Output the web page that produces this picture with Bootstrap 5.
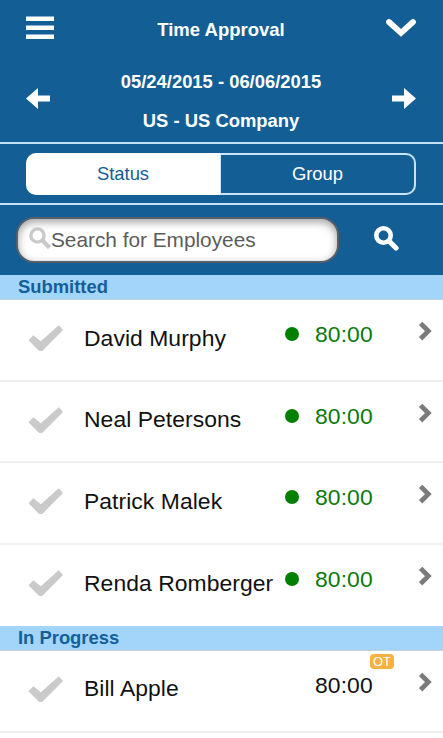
<!DOCTYPE html>
<html lang="en">
<head>
  <meta charset="UTF-8">
  <meta name="viewport" content="width=device-width, initial-scale=1">
  <title>Time Approval</title>
  <link href="https://cdn.jsdelivr.net/npm/bootstrap@5.3.3/dist/css/bootstrap.min.css" rel="stylesheet">
  <style>
    body { font-family: "Liberation Sans", Arial, sans-serif; color: #111; overflow: hidden; }
    svg { display: block; flex: none; }
    .app-top { background: #135f95; color: #fff; }
    .title-bar { height: 60px; padding: 0 27px 0 26px; }
    .title-bar h1 { font-size: 18.5px; line-height: 22px; padding-left: 2px; }
    .period-bar { height: 84px; padding: 3px 27px 0 26px; border-bottom: 2px solid #c4e2f5; }
    .period-bar .period-text { font-size: 18.4px; line-height: 38.5px; }
    .switch-bar { height: 61px; padding: 9px 27px 0 26px; border-bottom: 2px solid #c4e2f5; }
    .switch-bar .btn-group { height: 42px; }
    .switch-bar .btn { --bs-btn-color: #fff; --bs-btn-border-color: #c9e5f7; --bs-btn-border-width: 2px; --bs-btn-border-radius: 10px;
      --bs-btn-active-bg: #fff; --bs-btn-active-color: #135f95; --bs-btn-active-border-color: #fff;
      --bs-btn-padding-y: 0; --bs-btn-padding-x: 0; font-size: 18.4px; flex: 1 1 0; }
    .switch-bar .btn.active { flex: 0 0 194px; }
    .search-bar { height: 70px; padding: 0 44px 0 16px; }
    .search-box { width: 323px; height: 46px; padding-left: 11px; border: 2px solid #55606a; border-radius: 18px; background: #fff; box-shadow: inset 0 3px 8px rgba(0, 0, 0, .38); }
    .search-box .form-control { font-size: 20.8px; line-height: 26px; padding: 0; color: #555; }
    .search-box .form-control::placeholder { color: #5c5c5c; opacity: 1; }
    .group-title { height: 25px; padding-left: 18px; background: #a2d5f9; color: #135f9b; font-size: 18.4px; line-height: 23px; border-bottom: 1px solid #c3d3de; }
    .employee { height: 81.7px; padding: 0 11px 0 28px; border-bottom: 2px solid #efefef; }
    .employee.last-of-group { height: 80.9px; border-bottom: 0; }
    .emp-check { margin-top: 25px; width: 35px; }
    .emp-name { margin: 23.5px 0 0 21px; width: 195px; font-size: 22.9px; line-height: 28px; letter-spacing: .06px; white-space: nowrap; }
    .emp-dot { width: 14px; height: 14px; margin: 27px 0 0 6px; border-radius: 50%; }
    .emp-hours { margin: 20px 0 0 16px; font-size: 22.9px; line-height: 28px; letter-spacing: .1px; }
    .approved .emp-dot { background: #008000; }
    .approved .emp-hours { color: #0b7a0b; }
    .emp-arrow { margin-top: 21px; }
    .overtime { left: 370px; top: 3px; width: 24px; height: 15px; background: #fcb040; color: #fff; border-radius: 4px; font-size: 13px; line-height: 15px; text-align: center; }
  </style>
</head>
<body>
  <svg class="d-none">
    <symbol id="check" viewBox="0 0 35 27">
      <path d="M0.5 15.2 5.3 10.2 12.8 16.2 30.8 0.3 35 5 14.7 25.4Q12.7 26.8 10.6 25.4z" fill="#cacaca"/>
    </symbol>
    <symbol id="chevron" viewBox="0 0 14 20">
      <path d="M2.6 2.4 10.3 10.1 2.6 17.8" fill="none" stroke="#7b7b7b" stroke-width="4.8"/>
    </symbol>
  </svg>

  <header class="app-top">
    <div class="title-bar d-flex align-items-center justify-content-between">
      <svg class="mb-1" width="28" height="24" fill="#fff"><path d="M0 0.5h28v4.5H0zM0 9.5h28v4.5H0zM0 18.5h28v4.5H0z" /></svg>
      <h1 class="fw-bold m-0">Time Approval</h1>
      <svg class="mb-1" width="30" height="20" viewBox="0 0 30 20"><path d="M3 4 15 14.8 27 4" fill="none" stroke="#fff" stroke-width="5.8" stroke-linecap="round"/></svg>
    </div>
    <div class="period-bar d-flex justify-content-between">
      <svg class="mt-4" width="25" height="22" fill="#fff"><path d="M0 11.5 12 1v7.5h12v6H12V22z"/></svg>
      <div class="period-text fw-bold text-center">
        <div>05/24/2015 - 06/06/2015</div>
        <div>US - US Company</div>
      </div>
      <svg class="mt-4" width="25" height="22" fill="#fff"><path d="M25 11.5 13 1v7.5H1v6h12V22z"/></svg>
    </div>
    <div class="switch-bar">
      <div class="btn-group w-100">
        <button type="button" class="btn active">Status</button>
        <button type="button" class="btn">Group</button>
      </div>
    </div>
    <div class="search-bar d-flex align-items-center justify-content-between">
      <div class="search-box d-flex align-items-center">
        <svg class="mb-1" width="22" height="22" fill="none" stroke="#c9c9c9"><circle cx="8.5" cy="8.5" r="6.6" stroke-width="3.4"/><path d="M13 13 20.5 20.5" stroke-width="4.4"/></svg>
        <input type="text" class="form-control border-0 bg-transparent shadow-none" placeholder="Search for Employees">
      </div>
      <svg class="mb-1" width="25" height="25" fill="none" stroke="#fff"><circle cx="9.5" cy="9.5" r="7.2" stroke-width="4.6"/><path d="M15 15 22 22" stroke-width="5.2" stroke-linecap="round"/></svg>
    </div>
  </header>

  <main>
    <div class="group-title fw-bold">Submitted</div>
    <div id="submitted"></div>
    <div class="group-title fw-bold">In Progress</div>
    <div id="progress"></div>
  </main>

<script src="https://cdn.jsdelivr.net/npm/bootstrap@5.3.3/dist/js/bootstrap.bundle.min.js"></script>
<script>
    const submitted = [
        { name: "David Murphy", hours: "80:00" },
        { name: "Neal Petersons", hours: "80:00" },
        { name: "Patrick Malek", hours: "80:00" },
        { name: "Renda Romberger", hours: "80:00" }
    ];
    const progress = [{ name: "Bill Apple", hours: "80:00", overtime: true }];

    function showEmployees (id, list, approved) {
        document.getElementById(id).innerHTML = list.map((item, index) => `
            <div class="employee position-relative d-flex align-items-start ${approved ? "approved" : ""} ${approved && index === list.length - 1 ? "last-of-group" : ""}">
                <svg class="emp-check" width="35" height="27"><use href="#check"/></svg>
                <div class="emp-name">${item.name}</div>
                <span class="emp-dot"></span>
                <div class="emp-hours">${item.hours}</div>
                ${item.overtime ? '<span class="overtime position-absolute">OT</span>' : ""}
                <svg class="emp-arrow ms-auto" width="14" height="20"><use href="#chevron"/></svg>
            </div>
        `).join("");
    }

    showEmployees("submitted", submitted, true);
    showEmployees("progress", progress, false);
</script>
</body>
</html>
